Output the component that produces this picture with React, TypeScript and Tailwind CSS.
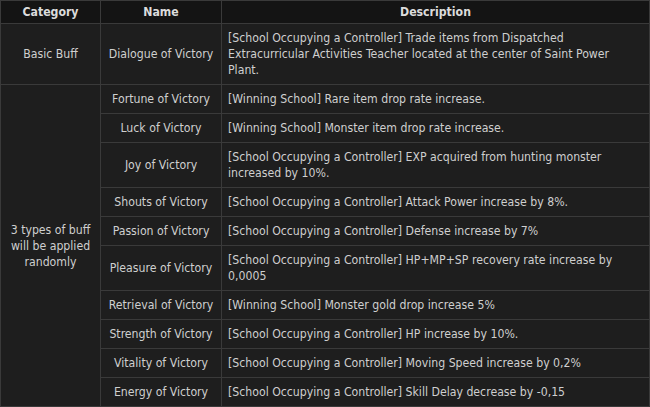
const rows = [
  { name: "Fortune of Victory", desc: "[Winning School] Rare item drop rate increase." },
  { name: "Luck of Victory", desc: "[Winning School] Monster item drop rate increase." },
  { name: "Joy of Victory", desc: "[School Occupying a Controller] EXP acquired from hunting monster increased by 10%." },
  { name: "Shouts of Victory", desc: "[School Occupying a Controller] Attack Power increase by 8%." },
  { name: "Passion of Victory", desc: "[School Occupying a Controller] Defense increase by 7%" },
  { name: "Pleasure of Victory", desc: "[School Occupying a Controller] HP+MP+SP recovery rate increase by 0,0005" },
  { name: "Retrieval of Victory", desc: "[Winning School] Monster gold drop increase 5%" },
  { name: "Strength of Victory", desc: "[School Occupying a Controller] HP increase by 10%." },
  { name: "Vitality of Victory", desc: "[School Occupying a Controller] Moving Speed increase by 0,2%" },
  { name: "Energy of Victory", desc: "[School Occupying a Controller] Skill Delay decrease by -0,15" },
];

const th = "border border-[#3a3a3a] bg-[#141414] py-[3px] text-center font-bold text-[#dcdcdc]";
const td = "border border-[#3a3a3a] py-[6px] px-[6px]";

export default function App() {
  return (
    <div className="w-[650px] h-[407px] bg-[#1e1e1e] font-['DejaVu_Sans_Condensed',sans-serif] text-[12.2px] leading-[16px] text-[#cfcfcf]">
      <table className="w-[650px] border-collapse table-fixed">
        <colgroup>
          <col className="w-[100px]" />
          <col className="w-[121px]" />
          <col />
        </colgroup>
        <thead>
          <tr>
            <th className={th}>Category</th>
            <th className={th}>Name</th>
            <th className={th}>Description</th>
          </tr>
        </thead>
        <tbody>
          <tr>
            <td className={`${td} text-center`}>Basic Buff</td>
            <td className={`${td} text-center`}>Dialogue of Victory</td>
            <td className={td}>
              [School Occupying a Controller] Trade items from Dispatched Extracurricular Activities Teacher located at the center of Saint Power Plant.
            </td>
          </tr>
          {rows.map((r, i) => (
            <tr key={r.name}>
              {i === 0 && (
                <td rowSpan={rows.length} className={`${td} text-center`}>
                  3 types of buff will be applied randomly
                </td>
              )}
              <td className={`${td} text-center`}>{r.name}</td>
              <td className={td}>{r.desc}</td>
            </tr>
          ))}
        </tbody>
      </table>
    </div>
  );
}
